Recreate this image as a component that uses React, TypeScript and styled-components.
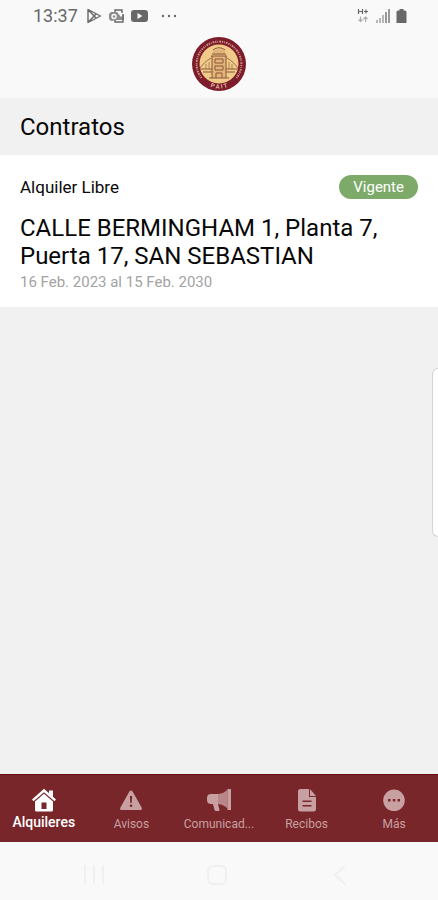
import React from "react";
import styled, { createGlobalStyle } from "styled-components";

const Global = createGlobalStyle`
  * { box-sizing: border-box; }
  body { margin: 0; background: #f1f1f1; font-family: Roboto, sans-serif; color: #080808; }
  button { border: 0; padding: 0; background: none; font: inherit; color: inherit; cursor: pointer; }
  svg { display: block; flex: none; }
`;

const Screen = styled.div`
  display: flex;
  flex-direction: column;
  min-height: 100vh;
`;

const StatusBar = styled.header`
  display: flex;
  align-items: center;
  justify-content: space-between;
  height: 32px;
  padding: 0 31px 0 33px;
  background: #f9f9f9;
  color: #686868;
`;

const StatusGroup = styled.div`
  display: flex;
  align-items: center;
  gap: 6px;
`;

const Clock = styled.time`
  font-size: 18px;
  line-height: 20px;
  margin-right: 2px;
`;

const Brand = styled.div`
  display: flex;
  justify-content: center;
  padding: 4px 0 6px;
  background: #f9f9f9;
`;

const Heading = styled.h1`
  margin: 0;
  padding: 15px 20px 14px;
  font-size: 24px;
  line-height: 28px;
  font-weight: 400;
`;

const Contract = styled.article`
  padding: 20px 20px 16px;
  background: #fff;
`;

const ContractTop = styled.div`
  display: flex;
  align-items: center;
  justify-content: space-between;
`;

const Kind = styled.span`
  font-size: 17px;
  line-height: 24px;
`;

const Badge = styled.span`
  padding: 0 14px;
  border-radius: 12px;
  background: #7daa69;
  color: #fff;
  font-size: 15px;
  line-height: 24px;
`;

const Address = styled.h2`
  margin: 15px 0 0;
  font-size: 24px;
  line-height: 28px;
  font-weight: 400;
`;

const Period = styled.p`
  margin: 3px 0 0;
  color: #a3a3a3;
  font-size: 15px;
  line-height: 18px;
`;

const EdgeHandle = styled.div`
  position: fixed;
  right: 0;
  top: 368px;
  width: 6px;
  height: 169px;
  border: 1px solid #d4d4d4;
  border-right: 0;
  border-radius: 6px 0 0 6px;
  background: #fff;
`;

const Tabs = styled.nav`
  display: grid;
  grid-template-columns: repeat(5, 1fr);
  margin-top: auto;
  height: 68px;
  background: #78262a;
  border-top: 1px solid #6a0f16;
`;

const Tab = styled.button<{ $active?: boolean }>`
  display: flex;
  flex-direction: column;
  align-items: center;
  padding-top: 13px;
  gap: ${(p) => (p.$active ? 1 : 3)}px;
  color: ${(p) => (p.$active ? "#fff" : "#c9a0a2")};
  font-size: ${(p) => (p.$active ? 14 : 12)}px;
  font-weight: ${(p) => (p.$active ? 500 : 400)};
  line-height: 18px;
`;

const SystemNav = styled.nav`
  display: grid;
  grid-template-columns: repeat(3, 1fr);
  align-items: center;
  height: 58px;
  padding: 8px 36px 0 32px;
  background: #f9f9f9;
  color: #f0f0f0;
`;

const SystemButton = styled.button`
  display: flex;
  justify-content: center;
`;

const Crest = () => (
  <svg width="56" height="56" viewBox="0 0 56 56" role="img" aria-label="Logo">
    <defs>
      <path id="crestBottom" d="M13 47.500 A24.500 24.500 0 0 0 43 47.500" />
    </defs>
    <circle cx="28" cy="28" r="27" fill="#7d1c2a" />
    <circle cx="28" cy="28" r="19.500" fill="#f0ca88" />
    <path d="M10.500 42 A22.400 22.400 0 1 1 45.500 42" fill="none" stroke="#e0b8a4" strokeWidth="2" strokeDasharray="1.3 0.9 0.8 1 1.8 0.8" opacity="0.75" />
    <text fontSize="6" fontWeight="700" fill="#dfb9a6" textAnchor="middle">
      <textPath href="#crestBottom" startOffset="50%">P A I T</textPath>
    </text>
    <path d="M22 15q6-4 12 0v4H22zM21 20h14v22H21z" fill="#e3b478" />
    <g fill="none" stroke="#8a573c" strokeWidth="1">
      <path d="M22 14c4-3 8-3 12 0M21 18h14M20 20h16M21 20v22M35 20v22M24 23h8v4h-8zM24 30h8v4h-8zM25 42v-5h6v5M9 33h12M35 33h12M12 36h9M35 36h9M18 42h20" />
      <path d="M20 22c-5 3-8 6-11 10M36 22c5 3 8 6 11 10" opacity="0.8" />
      <path d="M18 26v7M15 28v5M38 26v7M41 28v5" opacity="0.6" />
    </g>
  </svg>
);

const Icon = ({ children, w = 24, h = 24 }: { children: React.ReactNode; w?: number; h?: number }) => (
  <svg width={w} height={h} viewBox={`0 0 ${w} ${h}`} fill="currentColor" aria-hidden="true">{children}</svg>
);

const icons = {
  home: (
    <Icon w={26}>
      <path d="M13 .8 1 11.500l1.500 1.800L13 4.200l10.500 9.100 1.500-1.800-3-2.700V2.500h-4v2.700z" />
      <path fillRule="evenodd" d="M13 5.700 4 13.500V22q0 1.500 1.500 1.500h15Q22 23.500 22 22v-8.500zM10.500 14.500h5V21h-5z" />
    </Icon>
  ),
  alert: (
    <Icon>
      <path fillRule="evenodd" d="M10.400 3.400q1.600-2 3.200 0l9 16q1 2.600-1.600 2.600H3q-2.600 0-1.600-2.600zM10.900 8l.4 7h1.400l.4-7zM12 16.500a1.300 1.300 0 1 0 0 2.600 1.300 1.300 0 0 0 0-2.600z" />
    </Icon>
  ),
  horn: (
    <Icon w={26}>
      <path d="M5 6h7v10H5q-4 0-4-4V10q0-4 4-4zM7 16h5l1.500 6q0 1-1 1H10q-1 0-1.500-1z" />
      <path d="M12 6Q18 5.500 21.500 1.500V20.500Q18 16.500 12 16z" opacity="0.8" />
      <path d="M21.500 1H25v21h-3.500z" />
    </Icon>
  ),
  file: (
    <Icon>
      <path fillRule="evenodd" d="M5.500 1H14v8h7v12q0 2.500-2.500 2.500h-13Q3 23.500 3 21V3.500Q3 1 5.500 1zM7.500 12.500v1.500h9v-1.500zM7.500 17v1.500h9V17z" />
      <path d="M15 1 21 8h-6z" />
    </Icon>
  ),
  more: (
    <Icon>
      <path fillRule="evenodd" d="M12 1.500a10.800 10.800 0 1 1 0 21.600 10.800 10.800 0 0 1 0-21.600zM6 11v2.500h2.500V11zM10.800 11v2.500h2.500V11zM15.500 11v2.500H18V11z" />
    </Icon>
  ),
};

const tabs = [
  { label: "Alquileres", icon: icons.home, active: true },
  { label: "Avisos", icon: icons.alert },
  { label: "Comunicad...", icon: icons.horn },
  { label: "Recibos", icon: icons.file },
  { label: "Más", icon: icons.more },
];

export default function App() {
  return (
    <Screen>
      <Global />
      <StatusBar>
        <StatusGroup>
          <Clock>13:37</Clock>
          <Icon w={16} h={16}>
            <path d="M2 1.500 14.500 8 2 14.500zM2 1.500l8 8.500M2 14.500 10 6" fill="none" stroke="currentColor" strokeWidth="1.400" strokeLinejoin="round" />
          </Icon>
          <Icon w={17} h={16}>
            <path d="M7 4V2h7v3M7 12v2h8V6" fill="none" stroke="currentColor" strokeWidth="1.400" />
            <path d="M3 4h6l4 5 3-3v6H9l-6 1-2-2V6z" opacity="0.75" />
            <circle cx="6" cy="8.500" r="2" fill="none" stroke="#f9f9f9" strokeWidth="1.400" />
          </Icon>
          <Icon w={17} h={14}>
            <path fillRule="evenodd" d="M3 1h11q3 0 3 3v6q0 3-3 3H3q-3 0-3-3V4q0-3 3-3zM6.500 4v6l5-3z" />
          </Icon>
          <Icon w={28} h={4}>
            <circle cx="9" cy="2" r="1.200" /><circle cx="15" cy="2" r="1.200" /><circle cx="21" cy="2" r="1.200" />
          </Icon>
        </StatusGroup>
        <StatusGroup>
          <Icon w={12} h={16}>
            <path d="M1.500 1v5M5.500 1v5M1.500 3.500h4M7 3.500h4M9 1.500v4" stroke="currentColor" strokeWidth="1.200" />
            <path d="M3.500 8.500v5m-2-2 2 2 2-2M8.500 14V9m-2 2 2-2 2 2" fill="none" stroke="#aaa" strokeWidth="1.200" />
          </Icon>
          <Icon w={15} h={16}>
            <path d="M1 12h2v3H1zM4 10h2v5H4zM7 7h2v8H7z" fill="#b8b8b8" />
            <path d="M10 4h2v11h-2zM13 1h2v14h-2z" fill="#999" />
          </Icon>
          <Icon w={11} h={16}><path d="M3.500 1h4v1.500H9q1.500 0 1.500 1.500v11H.5V4q0-1.500 1.500-1.500h1.500z" /></Icon>
        </StatusGroup>
      </StatusBar>
      <Brand><Crest /></Brand>
      <main>
        <Heading>Contratos</Heading>
        <Contract>
          <ContractTop>
            <Kind>Alquiler Libre</Kind>
            <Badge>Vigente</Badge>
          </ContractTop>
          <Address>CALLE BERMINGHAM 1, Planta 7, Puerta 17, SAN SEBASTIAN</Address>
          <Period>16 Feb. 2023 al 15 Feb. 2030</Period>
        </Contract>
      </main>
      <EdgeHandle />
      <Tabs>
        {tabs.map((t) => (
          <Tab key={t.label} type="button" $active={t.active} aria-current={t.active ? "page" : undefined}>
            {t.icon}
            <span>{t.label}</span>
          </Tab>
        ))}
      </Tabs>
      <SystemNav>
        <SystemButton type="button" aria-label="Recientes">
          <Icon><path d="M3 2v19M12 2v19M21 2v19" stroke="currentColor" strokeWidth="2" /></Icon>
        </SystemButton>
        <SystemButton type="button" aria-label="Inicio">
          <Icon><rect x="3" y="3" width="18" height="18" rx="5" fill="none" stroke="currentColor" strokeWidth="2" /></Icon>
        </SystemButton>
        <SystemButton type="button" aria-label="Atrás">
          <Icon><path d="M17 3 7 12l10 9" fill="none" stroke="currentColor" strokeWidth="2" /></Icon>
        </SystemButton>
      </SystemNav>
    </Screen>
  );
}
